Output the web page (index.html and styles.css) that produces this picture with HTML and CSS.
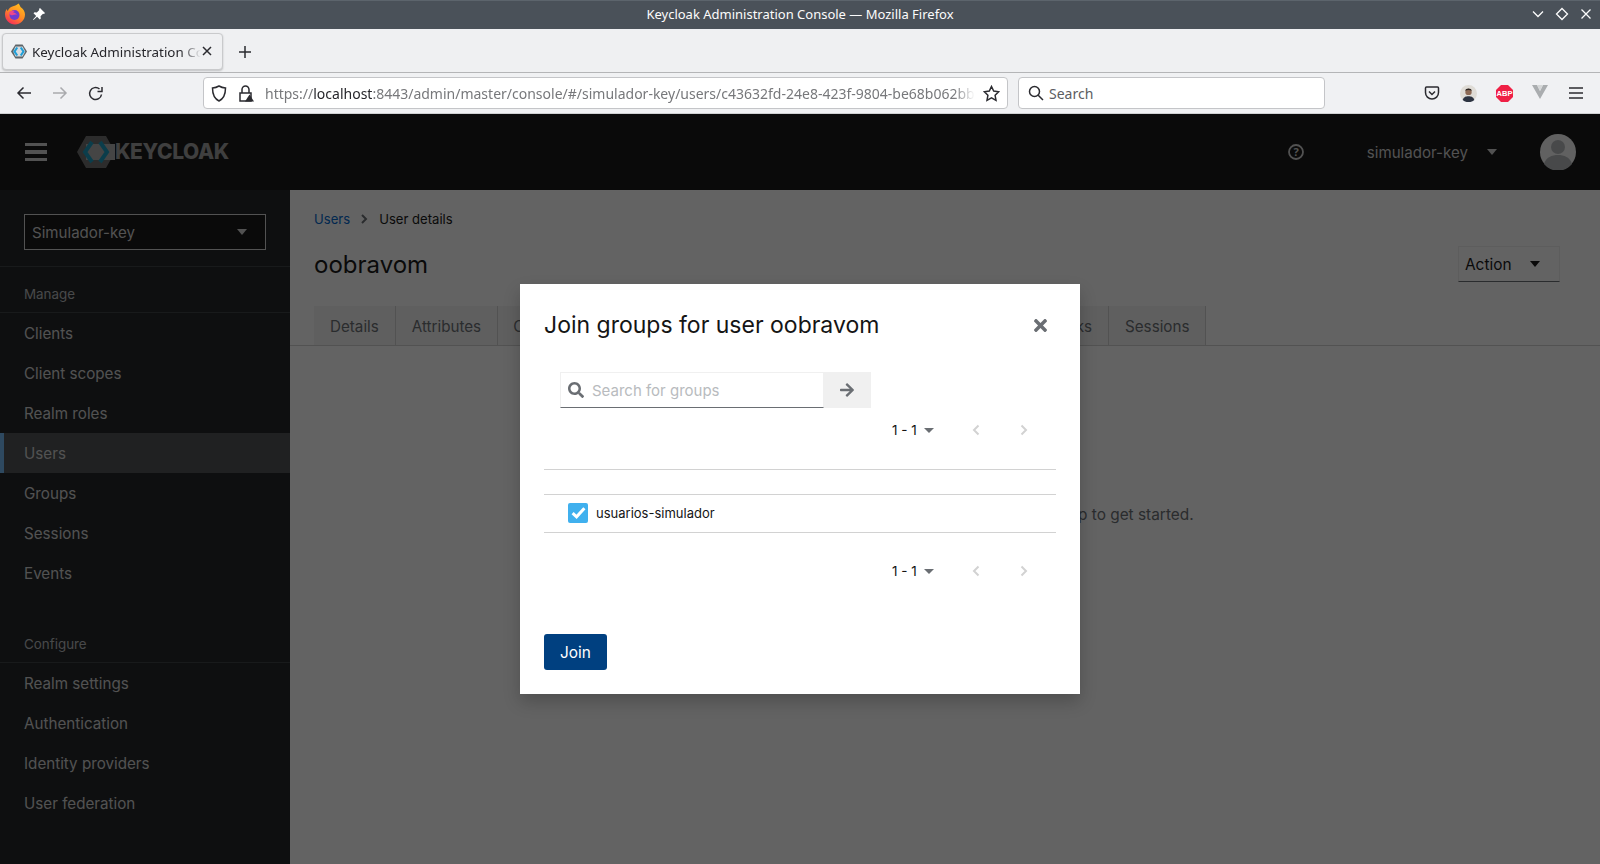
FILE: index.html
```html
<!DOCTYPE html>
<html lang="en">
<head>
    <meta charset="UTF-8">
    <title>Keycloak Administration Console</title>
    <link rel="stylesheet" href="styles.css">
</head>
<body>

    <!-- Window title bar -->
    <div class="titlebar">
        <div class="titlebar-left">
            <svg class="ff-logo" width="22" height="22" viewBox="0 0 22 22">
                <defs>
                    <linearGradient id="ffBody" x1="0.8" y1="0" x2="0.2" y2="1">
                        <stop offset="0" stop-color="#ffc01f"/>
                        <stop offset="0.5" stop-color="#ff8a24"/>
                        <stop offset="1" stop-color="#f5245f"/>
                    </linearGradient>
                </defs>
                <path d="M14.500 0.500c1.200 1.500 1.700 2.400 2 3.500 2.700 1.800 4.500 4.300 4.500 7.500 0 5.500-4.500 10-10 10s-10-4.500-10-10c0-2 .6-3.900 1.700-5.400.2 1 .6 1.600 1.100 2 .8-2.600 3-4.400 6-5 1-.5 3-1.200 4.700-2.600z" fill="url(#ffBody)"/>
                <circle cx="10.500" cy="12" r="5" fill="#6f3bd0"/>
                <path d="M5 9.500c1.500-1.500 3.500-2 6-1.500-1 .3-1.500.8-1.800 1.400 1.800.2 3 1 3.800 2.400-1.500-.6-2.800-.4-4 .2-1.800.8-3.400-.2-4-2.500z" fill="#f0478a"/>
            </svg>
            <svg class="pin" width="14" height="14" viewBox="0 0 14 14">
                <path d="M8 1l5 5-1 1-1-.3-2.500 2.500.3 2.300-1 1-2.700-2.700L1.500 13 1 12.500l3.200-3.600L1.500 6.200l1-1 2.300.3L7.300 3 7 2z" fill="#fff"/>
            </svg>
        </div>
        <div class="titlebar-title">Keycloak Administration Console — Mozilla Firefox</div>
        <div class="window-btns">
            <svg width="14" height="14" viewBox="0 0 14 14"><path d="M2 4.500l5 5 5-5" class="win-stroke"/></svg>
            <svg width="14" height="14" viewBox="0 0 14 14"><path d="M7 1.500L12.500 7 7 12.500 1.500 7z" class="win-stroke"/></svg>
            <svg width="14" height="14" viewBox="0 0 14 14"><path d="M2.500 2.500l9 9M11.500 2.500l-9 9" class="win-stroke"/></svg>
        </div>
    </div>

    <!-- Tabs -->
    <div class="tabstrip">
        <div class="browser-tab">
            <svg class="favicon" width="16" height="15" viewBox="0 0 18 16">
                <path d="M5 0h8l5 8-5 8H5L0 8z" fill="#5f6569"/>
                <path d="M5 2.500h8l3 5.500-3 5.500H5L2.500 8z" fill="#d9dde0"/>
                <path d="M7 3.500L4 8l3 4.500M11 3.500L14 8l-3 4.500" fill="none" stroke="#1f9fd8" stroke-width="2.400"/>
            </svg>
            <span class="browser-tab-title">Keycloak Administration Console</span>
            <svg class="tab-close" width="12" height="12" viewBox="0 0 12 12"><path d="M2 2l8 8M10 2l-8 8" class="dark-stroke"/></svg>
        </div>
        <svg class="new-tab" width="14" height="14" viewBox="0 0 14 14"><path d="M7 1v12M1 7h12" class="dark-stroke"/></svg>
    </div>

    <!-- Navigation toolbar -->
    <div class="navbar">
        <div class="nav-btns">
            <svg width="16" height="16" viewBox="0 0 16 16"><path d="M15 8H2M7.500 2.500L2 8l5.500 5.500" class="dark-stroke"/></svg>
            <svg width="16" height="16" viewBox="0 0 16 16"><path d="M1 8h13M8.500 2.500L14 8l-5.500 5.500" class="dark-stroke faded"/></svg>
            <svg class="reload" width="16" height="16" viewBox="0 0 16 16"><path d="M13.500 8.500A6 6 0 1 1 11.500 3M14 1v4.500H9.500" class="dark-stroke"/></svg>
        </div>
        <div class="urlbar">
            <svg class="url-shield" width="16" height="17" viewBox="0 0 16 17"><path d="M8 1c2 1.200 4 1.800 6.500 2 0 6-1.500 10.500-6.500 13C3 13.500 1.500 9 1.500 3 4 2.800 6 2.200 8 1z" class="dark-stroke"/></svg>
            <svg class="url-lock" width="16" height="17" viewBox="0 0 16 17">
                <path d="M4 8V4.500a3.500 3.500 0 0 1 7 0V8M2 8h11v8H2z" class="dark-stroke"/>
                <path d="M11.500 9.500l4.500 7H7z" fill="#2b2b30"/>
            </svg>
            <div class="url-text">https://<b>localhost</b>:8443/admin/master/console/#/simulador-key/users/c43632fd-24e8-423f-9804-be68b062bb1</div>
            <svg class="url-star" width="17" height="17" viewBox="0 0 17 17"><path d="M8.500 1.500l2.200 4.600 5 .7-3.600 3.500.9 5-4.500-2.400L4 15.300l.9-5L1.300 6.800l5-.7z" class="dark-stroke"/></svg>
        </div>
        <div class="searchbar">
            <svg width="16" height="16" viewBox="0 0 16 16"><circle cx="6.500" cy="6.500" r="5" class="dark-stroke"/><path d="M10.200 10.200L15 15" class="dark-stroke"/></svg>
            <span>Search</span>
        </div>
        <div class="nav-icons">
            <svg width="16" height="16" viewBox="0 0 16 16"><path d="M2.500 2h11c.6 0 1 .4 1 1v4.500A6.500 6.500 0 0 1 8 14a6.500 6.500 0 0 1-6.500-6.500V3c0-.6.4-1 1-1z" class="dark-stroke"/><path d="M5 6.500L8 9.500l3-3" class="dark-stroke"/></svg>
            <svg width="17" height="17" viewBox="0 0 16 16">
                <circle cx="8" cy="8" r="8" fill="#dfdcd6"/>
                <path d="M2.500 14c1-3 3-3.500 5.500-3.500s4.500.5 5.500 3.500A8 8 0 0 1 2.500 14z" fill="#2c3340"/>
                <circle cx="8" cy="6.500" r="3" fill="#8d6a55"/>
                <path d="M5 5.500C5 2.500 11 2.500 11 5.500 9 4.500 7 4.500 5 5.500z" fill="#2c2622"/>
            </svg>
            <svg width="17" height="17" viewBox="0 0 17 17">
                <path d="M5 0h7l5 5v7l-5 5H5l-5-5V5z" fill="#ef2045"/>
                <text x="8.500" y="11.300" class="abp-text">ABP</text>
            </svg>
            <svg class="vue-icon" width="16" height="14" viewBox="0 0 16 14"><path d="M0 0h5l3 6 3-6h5L8 14z" fill="#aaadaf"/><path d="M5 0h6L8 6z" fill="#d5d7d8"/></svg>
            <svg width="14" height="12" viewBox="0 0 14 12"><path d="M0 1h14M0 6h14M0 11h14" class="dark-stroke"/></svg>
        </div>
    </div>

    <!-- Application -->
    <div class="app-header">
        <div class="hamburger">
            <span></span><span></span><span></span>
        </div>
        <div class="kc-logo">
            <svg width="38" height="32" viewBox="0 0 38 32">
                <path d="M9 0h20l9 16-9 16H9L0 16z" fill="#6f6f6f"/>
                <path d="M9 8h29v16H9z" fill="#b0b0b0"/>
                <path d="M15 6L8 16l7 10M23 6l7 10-7 10" fill="none" stroke="#1a9cc0" stroke-width="4"/>
            </svg>
            <span class="kc-name">KEYCLOAK</span>
        </div>
        <div class="header-right">
            <svg class="help" width="16" height="16" viewBox="0 0 16 16"><circle cx="8" cy="8" r="7" fill="none" stroke="#d2d2d2" stroke-width="1.800"/><text x="8" y="11.800" class="help-text">?</text></svg>
            <span class="header-user">simulador-key</span>
            <span class="caret caret-light header-caret"></span>
            <div class="avatar">
                <svg width="36" height="36" viewBox="0 0 36 36">
                    <circle cx="18" cy="18" r="18" fill="#fafafa"/>
                    <circle cx="18" cy="13" r="7" fill="#b8bbbe"/>
                    <path d="M4 30c2-7 8-9 14-9s12 2 14 9a18 18 0 0 1-28 0z" fill="#b8bbbe"/>
                </svg>
            </div>
        </div>
    </div>

    <div class="app-body">
        <nav class="sidebar">
            <div class="realm-wrap">
                <div class="realm-select">
                    <span>Simulador-key</span>
                    <span class="caret caret-light"></span>
                </div>
            </div>
            <div class="nav-group-title">Manage</div>
            <a class="nav-item">Clients</a>
            <a class="nav-item">Client scopes</a>
            <a class="nav-item">Realm roles</a>
            <a class="nav-item active">Users</a>
            <a class="nav-item">Groups</a>
            <a class="nav-item">Sessions</a>
            <a class="nav-item">Events</a>
            <div class="nav-group-title second">Configure</div>
            <a class="nav-item">Realm settings</a>
            <a class="nav-item">Authentication</a>
            <a class="nav-item">Identity providers</a>
            <a class="nav-item">User federation</a>
        </nav>

        <main class="content">
            <div class="breadcrumb">
                <a class="crumb-link">Users</a>
                <svg class="crumb-sep" width="8" height="10" viewBox="0 0 8 10"><path d="M2 1l4 4-4 4" fill="none" stroke="#6a6e73" stroke-width="2"/></svg>
                <span>User details</span>
            </div>
            <div class="page-head">
                <h1>oobravom</h1>
                <div class="action-btn">
                    <span>Action</span>
                    <span class="caret caret-dark"></span>
                </div>
            </div>
            <div class="tabs">
                <div class="tab">Details</div>
                <div class="tab">Attributes</div>
                <div class="tab tab-tight">Credentials</div>
                <div class="tab tab-tight">Role mapping</div>
                <div class="tab tab-tight">Groups</div>
                <div class="tab tab-tight">Consents</div>
                <div class="tab">Identity provider links</div>
                <div class="tab">Sessions</div>
            </div>
            <p class="empty-text">You have not added this user to any groups. Join a group to get started.</p>
        </main>
    </div>

    <div class="backdrop"></div>

    <!-- Join groups dialog -->
    <div class="modal">
        <div class="modal-head">
            <h2>Join groups for user oobravom</h2>
            <svg class="modal-close" width="13" height="19" viewBox="0 0 352 512"><path d="M242.720 256l100.070-100.070c12.280-12.280 12.280-32.190 0-44.480l-22.240-22.240c-12.280-12.280-32.190-12.280-44.480 0L176 189.280 75.930 89.210c-12.280-12.280-32.190-12.280-44.480 0L9.210 111.450c-12.280 12.280-12.280 32.190 0 44.480L109.280 256 9.210 356.070c-12.280 12.280-12.280 32.190 0 44.480l22.240 22.240c12.280 12.280 32.200 12.280 44.480 0L176 322.720l100.070 100.070c12.280 12.280 32.200 12.280 44.480 0l22.240-22.240c12.280-12.280 12.280-32.190 0-44.480L242.720 256z" fill="#6a6e73"/></svg>
        </div>
        <div class="group-search">
            <div class="search-input">
                <svg width="16" height="16" viewBox="0 0 512 512"><path d="M505 442.700L405.300 343c-4.500-4.500-10.600-7-17-7H372c27.600-35.300 44-79.700 44-128C416 93.100 322.900 0 208 0S0 93.100 0 208s93.100 208 208 208c48.300 0 92.700-16.400 128-44v16.300c0 6.400 2.500 12.500 7 17l99.700 99.700c9.400 9.400 24.600 9.400 33.900 0l28.300-28.300c9.400-9.400 9.400-24.600.1-34zM208 336c-70.700 0-128-57.200-128-128 0-70.700 57.200-128 128-128 70.700 0 128 57.200 128 128 0 70.700-57.200 128-128 128z" fill="#6a6e73"/></svg>
                <span>Search for groups</span>
            </div>
            <div class="search-go">
                <svg width="14" height="16" viewBox="0 0 448 512"><path d="M190.500 66.900l22.200-22.200c9.400-9.400 24.600-9.400 33.900 0L441 239c9.400 9.400 9.400 24.600 0 33.900L246.600 467.300c-9.400 9.400-24.600 9.400-33.900 0l-22.200-22.200c-9.500-9.500-9.300-25 .4-34.300L311.400 296H24c-13.300 0-24-10.700-24-24v-32c0-13.300 10.700-24 24-24h287.400L190.900 101.200c-9.800-9.300-10-24.800-.4-34.300z" fill="#6a6e73"/></svg>
            </div>
        </div>
        <div class="pager pager-top">
            <span class="pager-count">1 - 1</span>
            <span class="caret caret-grey"></span>
            <svg class="pager-prev" width="8" height="12" viewBox="0 0 8 12"><path d="M6.500 1.500L2 6l4.500 4.500" class="pager-stroke"/></svg>
            <svg class="pager-next" width="8" height="12" viewBox="0 0 8 12"><path d="M1.500 1.500L6 6l-4.500 4.500" class="pager-stroke"/></svg>
        </div>
        <div class="group-table">
            <div class="table-head"></div>
            <div class="table-row">
                <span class="check">
                    <svg width="15" height="13" viewBox="0 0 14 12"><path d="M1.500 6.500L5.200 10l7.300-8" fill="none" stroke="#fff" stroke-width="2.800"/></svg>
                </span>
                <span>usuarios-simulador</span>
            </div>
        </div>
        <div class="pager pager-bottom">
            <span class="pager-count">1 - 1</span>
            <span class="caret caret-grey"></span>
            <svg class="pager-prev" width="8" height="12" viewBox="0 0 8 12"><path d="M6.500 1.500L2 6l4.500 4.500" class="pager-stroke"/></svg>
            <svg class="pager-next" width="8" height="12" viewBox="0 0 8 12"><path d="M1.500 1.500L6 6l-4.500 4.500" class="pager-stroke"/></svg>
        </div>
        <div class="join-btn">Join</div>
    </div>

</body>
</html>
```

FILE: styles.css
```css
/* Basic reset */
* {
    margin: 0;
    padding: 0;
    box-sizing: border-box;
}

body {
    width: 1600px;
    height: 864px;
    overflow: hidden;
    font-family: "Noto Sans", sans-serif;
    background-color: #fff;
    color: #151515;
}

svg {
    display: block;
    flex-shrink: 0;
}

.dark-stroke {
    fill: none;
    stroke: #2b2b30;
    stroke-width: 1.5;
}

.faded {
    stroke: #a9aaad;
}

.win-stroke {
    fill: none;
    stroke: #fcfcfc;
    stroke-width: 1.3;
}

/* Window title bar */
.titlebar {
    height: 29px;
    background-color: #4a5159;
    border-top: 1px solid #5c646c;
    display: flex;
    align-items: center;
    padding-bottom: 2px;
}

.titlebar-left {
    width: 100px;
    display: flex;
    align-items: center;
    gap: 6px;
    padding-left: 4px;
}

.titlebar-title {
    flex: 1;
    text-align: center;
    color: #fcfcfc;
    font-size: 13px;
}

.window-btns {
    width: 100px;
    display: flex;
    justify-content: flex-end;
    gap: 10px;
    padding-right: 7px;
}

/* Tab strip */
.tabstrip {
    height: 44px;
    background-color: #eff0f2;
    border-bottom: 1px solid #b4b5b7;
    display: flex;
    align-items: center;
    padding-left: 2px;
}

.browser-tab {
    width: 221px;
    height: 37px;
    margin-top: 1px;
    background-color: #eff0f2;
    border: 1px solid #c9cacc;
    border-radius: 4px;
    box-shadow: 0 1px 2px rgba(0, 0, 0, 0.2);
    display: flex;
    align-items: center;
    padding-left: 8px;
}

.browser-tab-title {
    width: 169px;
    margin-left: 5px;
    padding-top: 1px;
    font-size: 13.400px;
    color: #26262b;
    white-space: nowrap;
    overflow: hidden;
    -webkit-mask-image: linear-gradient(to right, #000 88%, transparent 100%);
    mask-image: linear-gradient(to right, #000 88%, transparent 100%);
}

.new-tab {
    margin-left: 15px;
    margin-top: 2px;
}

/* Navigation toolbar */
.navbar {
    height: 41px;
    background-color: #f0f1f3;
    border-bottom: 1px solid #cfd0d2;
    display: flex;
    align-items: center;
}

.nav-btns {
    width: 203px;
    display: flex;
    gap: 20px;
    padding-left: 16px;
}

.reload {
    margin-top: 1px;
}

.urlbar {
    width: 805px;
    height: 32px;
    background-color: #fff;
    border: 1px solid #c4c5c8;
    border-radius: 4px;
    display: flex;
    align-items: center;
    padding: 0 7px 0 7px;
}

.url-lock {
    margin-left: 11px;
}

.url-text {
    flex: 1;
    margin-left: 11px;
    margin-right: 8px;
    font-size: 14px;
    color: #77787b;
    white-space: nowrap;
    overflow: hidden;
    -webkit-mask-image: linear-gradient(to right, #000 97%, transparent 100%);
    mask-image: linear-gradient(to right, #000 97%, transparent 100%);
}

.url-text b {
    font-weight: 400;
    color: #26262b;
}

.searchbar {
    width: 307px;
    height: 32px;
    margin-left: 10px;
    background-color: #fff;
    border: 1px solid #c4c5c8;
    border-radius: 4px;
    display: flex;
    align-items: center;
    gap: 5px;
    padding-left: 9px;
    font-size: 14px;
    color: #5c5d61;
}

.nav-icons {
    flex: 1;
    display: grid;
    grid-template-columns: repeat(5, 36px);
    justify-content: end;
    justify-items: center;
    align-items: center;
    padding-right: 6px;
}

.vue-icon {
    margin-top: -2px;
}

.abp-text {
    font-family: "Liberation Sans", sans-serif;
    font-size: 7.500px;
    font-weight: 700;
    fill: #fff;
    text-anchor: middle;
}

/* App header */
.app-header {
    height: 76px;
    background-color: #151515;
    display: flex;
    align-items: center;
    font-family: Inter, sans-serif;
}

.hamburger {
    width: 22px;
    margin-left: 25px;
    display: flex;
    flex-direction: column;
    gap: 4px;
}

.hamburger span {
    height: 3.500px;
    background-color: #d2d2d2;
}

.kc-logo {
    margin-left: 30px;
    display: flex;
    align-items: center;
}

.kc-name {
    margin-bottom: 2px;
    font-weight: 800;
    font-size: 21px;
    letter-spacing: -0.4px;
    color: #a0a0a0;
}

.header-right {
    margin-left: auto;
    display: flex;
    align-items: center;
    padding-right: 24px;
}

.help-text {
    font-family: "Noto Sans", sans-serif;
    font-size: 11px;
    font-weight: 700;
    fill: #d2d2d2;
    text-anchor: middle;
}

.header-user {
    margin-left: 63px;
    font-size: 15.100px;
    color: #d2d2d2;
}

.header-caret {
    margin-left: 19px;
}

.avatar {
    margin-left: 43px;
}

/* Carets */
.caret {
    display: inline-block;
    width: 0;
    height: 0;
    border-left: 5.500px solid transparent;
    border-right: 5.500px solid transparent;
    border-top: 6px solid #d2d2d2;
}

.caret-dark {
    border-top-color: #151515;
}

.caret-grey {
    border-left-width: 5px;
    border-right-width: 5px;
    border-top: 5px solid #6a6e73;
}

/* Sidebar + content */
.app-body {
    height: 674px;
    display: flex;
    font-family: Inter, sans-serif;
}

.sidebar {
    width: 290px;
    background-color: #212427;
    display: flex;
    flex-direction: column;
}

.realm-wrap {
    padding: 24px 24px 16px;
    border-bottom: 1px solid #3c3f42;
}

.realm-select {
    height: 36px;
    width: 242px;
    background-color: #151515;
    border: 1px solid #d2d2d2;
    display: flex;
    align-items: center;
    justify-content: space-between;
    padding: 0 18px 0 7px;
    font-size: 15.100px;
    color: #d2d2d2;
}

.nav-group-title {
    height: 46px;
    padding: 18px 0 0 24px;
    border-bottom: 1px solid #3c3f42;
    font-size: 13.400px;
    line-height: 18px;
    color: #b8bbbe;
}

.nav-group-title.second {
    height: 70px;
    padding-top: 42px;
}

.nav-item {
    display: block;
    height: 40px;
    padding-left: 24px;
    font-size: 15.200px;
    line-height: 41px;
    color: #d2d2d2;
}

.nav-item.active {
    background-color: #4f5255;
    border-left: 4px solid #73bcf7;
    padding-left: 20px;
}

.content {
    flex: 1;
    padding-top: 18px;
    background-color: #fff;
}

.breadcrumb {
    height: 22px;
    padding-left: 24px;
    display: flex;
    align-items: center;
    font-size: 13.100px;
    color: #151515;
}

.crumb-link {
    color: #06c;
}

.crumb-sep {
    margin: 0 11px 0 10px;
}

.page-head {
    margin-top: 16px;
    height: 36px;
    padding: 0 40px 0 24px;
    display: flex;
    align-items: center;
    justify-content: space-between;
}

.page-head h1 {
    font-size: 24px;
    font-weight: 400;
}

.action-btn {
    width: 102px;
    height: 36px;
    border: 1px solid #f0f0f0;
    border-bottom-color: #6a6e73;
    display: flex;
    align-items: center;
    gap: 18px;
    padding-left: 6px;
    font-size: 15.400px;
}

.tabs {
    margin-top: 24px;
    height: 40px;
    padding-left: 24px;
    display: flex;
    border-bottom: 1px solid #d2d2d2;
}

.tab {
    padding: 0 16px;
    background-color: #f5f5f5;
    border-right: 1px solid #d2d2d2;
    font-size: 15.200px;
    line-height: 41px;
    color: #6a6e73;
    white-space: nowrap;
}

.tab-tight {
    padding: 0 15px;
}

.empty-text {
    margin-top: 157px;
    padding-right: 24px;
    text-align: center;
    font-size: 15.400px;
    line-height: 24px;
    color: #6a6e73;
}

.backdrop {
    position: absolute;
    top: 114px;
    left: 0;
    width: 1600px;
    height: 750px;
    background-color: rgba(3, 3, 3, 0.62);
}

/* Modal */
.modal {
    position: absolute;
    top: 284px;
    left: 520px;
    width: 560px;
    height: 410px;
    background-color: #fff;
    padding: 0 24px;
    font-family: Inter, sans-serif;
    box-shadow: 0 8px 16px rgba(3, 3, 3, 0.2);
}

.modal-head {
    height: 88px;
    padding-top: 23px;
    display: flex;
    justify-content: space-between;
}

.modal-head h2 {
    font-size: 23px;
    font-weight: 400;
    line-height: 36px;
}

.modal-close {
    margin: 9px 9px 0 0;
}

.group-search {
    margin-left: 16px;
    display: flex;
}

.search-input {
    width: 264px;
    height: 36px;
    border: 1px solid #f0f0f0;
    border-bottom: 1px solid #6a6e73;
    display: flex;
    align-items: center;
    gap: 8px;
    padding-left: 7px;
    font-size: 15px;
    color: #b8bbbe;
}

.search-go {
    width: 47px;
    height: 36px;
    padding-right: 1px;
    background-color: #f0f0f0;
    display: flex;
    align-items: center;
    justify-content: center;
}

.pager {
    display: flex;
    align-items: center;
    height: 24px;
    padding-left: 348px;
    font-size: 13.500px;
}

.pager-top {
    margin-top: 10px;
}

.pager-count {
    width: 32px;
}

.pager-prev {
    margin-left: 38px;
}

.pager-next {
    margin-left: 40px;
}

.pager-stroke {
    fill: none;
    stroke: #d2d2d2;
    stroke-width: 2;
}

.group-table {
    margin-top: 27px;
    border-top: 1px solid #d2d2d2;
}

.table-head {
    height: 25px;
    border-bottom: 1px solid #d2d2d2;
}

.table-row {
    height: 38px;
    border-bottom: 1px solid #d2d2d2;
    display: flex;
    align-items: center;
    padding: 0 0 2px 24px;
    font-size: 13px;
    color: #151515;
}

.check {
    width: 20px;
    height: 20px;
    margin-right: 8px;
    background-color: #40b0ee;
    border-radius: 2px;
    display: flex;
    align-items: center;
    justify-content: center;
}

.pager-bottom {
    margin-top: 26px;
}

.join-btn {
    width: 63px;
    height: 36px;
    margin-top: 51px;
    background-color: #004080;
    border-radius: 3px;
    color: #fff;
    font-size: 15.400px;
    line-height: 38px;
    text-align: center;
}
```
